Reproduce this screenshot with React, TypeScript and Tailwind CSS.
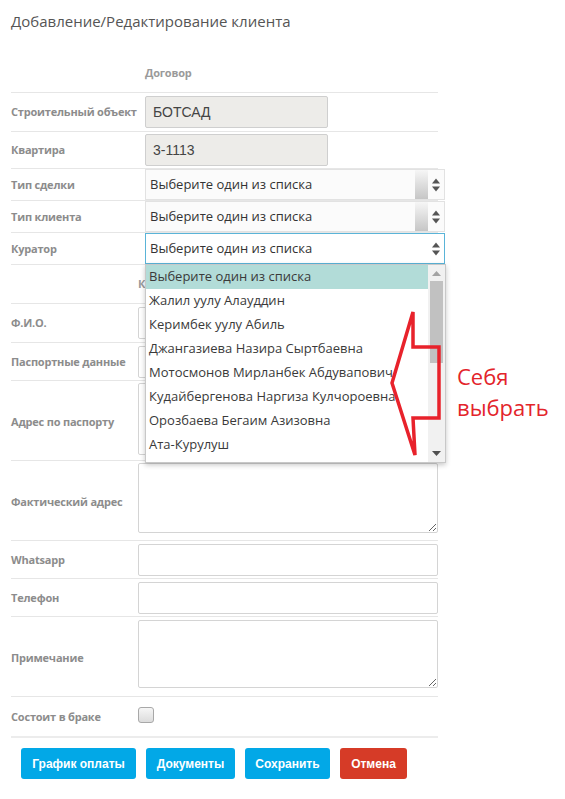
import React from "react";

const labelCls = "shrink-0 whitespace-nowrap text-[11px] tracking-[-0.2px] font-bold text-[#8c8c8c] leading-[16px]";

function SelectBox({ focused = false }: { focused?: boolean }) {
  return (
    <div
      className={`relative shrink-0 w-[300px] h-[31px] border ${
        focused ? "border-[#5ab4d8] bg-white" : "border-[#e2e2e2] bg-[#fbfbfb]"
      } flex items-center pl-[4px] text-[13px] text-[#333]`}
    >
      <span>Выберите один из списка</span>
      {!focused && (
        <div className="absolute right-[16px] top-0 bottom-0 w-[13px] bg-gradient-to-b from-[#f6f6f6] to-[#c6c6c6]" />
      )}
      <svg className="absolute right-[3px] top-[7px]" width="10" height="16" viewBox="0 0 10 16">
        <polygon points="1,6.5 5,1.5 9,6.5" fill="#555" />
        <polygon points="1,9.5 5,14.5 9,9.5" fill="#555" />
      </svg>
    </div>
  );
}

function TextInput() {
  return <div className="shrink-0 w-[300px] h-[32px] border border-[#d4d4d4] rounded-[2px] bg-white" />;
}

function Area({ h }: { h: string }) {
  return (
    <textarea
      className={`block shrink-0 w-[300px] ${h} border border-[#d4d4d4] rounded-[2px] bg-white outline-none`}
      readOnly
    />
  );
}

const options = [
  "Выберите один из списка",
  "Жалил уулу Алауддин",
  "Керимбек уулу Абиль",
  "Джангазиева Назира Сыртбаевна",
  "Мотосмонов Мирланбек Абдувапович",
  "Кудайбергенова Наргиза Кулчороевна",
  "Орозбаева Бегаим Азизовна",
  "Ата-Курулуш",
  "Байгазиева Перизат Асановна",
];

export default function App() {
  return (
    <div className="relative w-[565px] h-[799px] bg-white overflow-hidden font-['Open_Sans',sans-serif]">
      <div className="pl-[11px] pt-[10px] w-[438px]">
        <h1 className="text-[15px] leading-[22px] text-[#555] font-normal">
          Добавление/Редактирование клиента
        </h1>

        {/* Договор section */}
        <div className="mt-[22px] h-[38px] flex items-center pl-[134px]">
          <span className={labelCls + " text-[#9a9a9a]"}>Договор</span>
        </div>

        <div className="h-[39px] border-t border-[#e6e6e6] flex items-center">
          <div className={`w-[134px] ${labelCls}`}>Строительный объект</div>
          <div className="shrink-0 w-[183px] h-[32px] border border-[#cfcfcf] rounded-[2px] bg-[#edece9] flex items-center pl-[7px] text-[14px] text-[#444] font-['Liberation_Sans',Arial,sans-serif]">
            БОТСАД
          </div>
        </div>
        <div className="h-[37px] border-t border-[#e6e6e6] flex items-center">
          <div className={`w-[134px] ${labelCls}`}>Квартира</div>
          <div className="shrink-0 w-[183px] h-[32px] border border-[#cfcfcf] rounded-[2px] bg-[#edece9] flex items-center pl-[7px] text-[14px] text-[#444] font-['Liberation_Sans',Arial,sans-serif]">
            3-1113
          </div>
        </div>
        <div className="h-[32px] border-t border-[#e6e6e6] flex items-center">
          <div className={`w-[134px] ${labelCls}`}>Тип сделки</div>
          <SelectBox />
        </div>
        <div className="h-[32px] border-t border-[#e6e6e6] flex items-center">
          <div className={`w-[134px] ${labelCls}`}>Тип клиента</div>
          <SelectBox />
        </div>
        <div className="h-[32px] border-t border-[#e6e6e6] flex items-center">
          <div className={`w-[134px] ${labelCls}`}>Куратор</div>
          <SelectBox focused />
        </div>

        {/* Клиент section */}
        <div className="h-[39px] border-t border-[#e6e6e6] flex items-center pl-[127px]">
          <span className={labelCls + " text-[#9a9a9a]"}>Клиент</span>
        </div>
        <div className="h-[39px] border-t border-[#e6e6e6] flex items-center">
          <div className={`w-[127px] ${labelCls}`}>Ф.И.О.</div>
          <TextInput />
        </div>
        <div className="h-[38px] border-t border-[#e6e6e6] flex items-center">
          <div className={`w-[127px] ${labelCls}`}>Паспортные данные</div>
          <TextInput />
        </div>
        <div className="h-[80px] border-t border-[#e6e6e6] flex items-start pt-[2px]">
          <div className={`w-[127px] self-center ${labelCls}`}>Адрес по паспорту</div>
          <Area h="h-[72px]" />
        </div>
        <div className="h-[80px] border-t border-[#e6e6e6] flex items-start pt-[2px]">
          <div className={`w-[127px] self-center ${labelCls}`}>Фактический адрес</div>
          <Area h="h-[70px]" />
        </div>
        <div className="h-[38px] border-t border-[#e6e6e6] flex items-center">
          <div className={`w-[127px] ${labelCls}`}>Whatsapp</div>
          <TextInput />
        </div>
        <div className="h-[38px] border-t border-[#e6e6e6] flex items-center">
          <div className={`w-[127px] ${labelCls}`}>Телефон</div>
          <TextInput />
        </div>
        <div className="h-[80px] border-t border-[#e6e6e6] flex items-start pt-[3px]">
          <div className={`w-[127px] self-center ${labelCls}`}>Примечание</div>
          <Area h="h-[68px]" />
        </div>
        <div className="h-[40px] border-t border-[#e6e6e6] flex items-center">
          <div className={`w-[127px] ${labelCls}`}>Состоит в браке</div>
          <div className="w-[16px] h-[16px] border border-[#a8a8a8] rounded-[3px] bg-gradient-to-b from-[#f6f6f6] to-[#dcdcdc] -mt-[3px]" />
        </div>
        <div className="border-t-2 border-[#ececec] pt-[10px] pl-[10px] flex gap-[10px] font-['Liberation_Sans',Arial,sans-serif] text-[12px] font-bold text-white">
          <button className="w-[115px] h-[31px] rounded-[3px] bg-[#02a8e7]">График оплаты</button>
          <button className="w-[89px] h-[31px] rounded-[3px] bg-[#02a8e7]">Документы</button>
          <button className="w-[85px] h-[31px] rounded-[3px] bg-[#02a8e7]">Сохранить</button>
          <button className="w-[67px] h-[31px] rounded-[3px] bg-[#d63b27]">Отмена</button>
        </div>
      </div>

      {/* open dropdown list */}
      <div className="absolute left-[145px] top-[264px] w-[301px] h-[199px] bg-white border border-[#c8c8c8] shadow-[0_2px_5px_rgba(0,0,0,0.22)] flex overflow-hidden">
        <div className="flex-1 flex flex-col">
          {options.map((o, i) => (
            <div
              key={o}
              className={`h-[24px] shrink-0 flex items-center pl-[3px] text-[13px] text-[#3a3a3a] whitespace-nowrap ${
                i === 0 ? "bg-[#b2dcd8]" : ""
              }`}
            >
              {o}
            </div>
          ))}
        </div>
        <div className="relative shrink-0 w-[17px] h-full bg-[#f1f1f1]">
          <svg className="absolute left-[4px] top-[6px]" width="9" height="5" viewBox="0 0 9 5">
            <polygon points="0,5 4.5,0 9,5" fill="#a3a3a3" />
          </svg>
          <div className="absolute left-[2px] right-[2px] top-[16px] h-[82px] bg-[#c1c1c1]" />
          <svg className="absolute left-[4px] bottom-[6px]" width="9" height="5" viewBox="0 0 9 5">
            <polygon points="0,0 4.5,5 9,0" fill="#505050" />
          </svg>
        </div>
      </div>

      {/* red annotation */}
      <svg className="absolute left-0 top-0 pointer-events-none" width="565" height="799" viewBox="0 0 565 799">
        <polygon
          points="413,312 413,347 439,347 439,418 413,418 415,455 392,383"
          fill="none"
          stroke="#e8222b"
          strokeWidth="3.5"
          strokeLinejoin="miter"
        />
      </svg>
      <div className="absolute left-[457px] top-[361px] text-[22px] leading-[31px] text-[#e3242b]">
        <div>Себя</div>
        <div>выбрать</div>
      </div>
    </div>
  );
}
